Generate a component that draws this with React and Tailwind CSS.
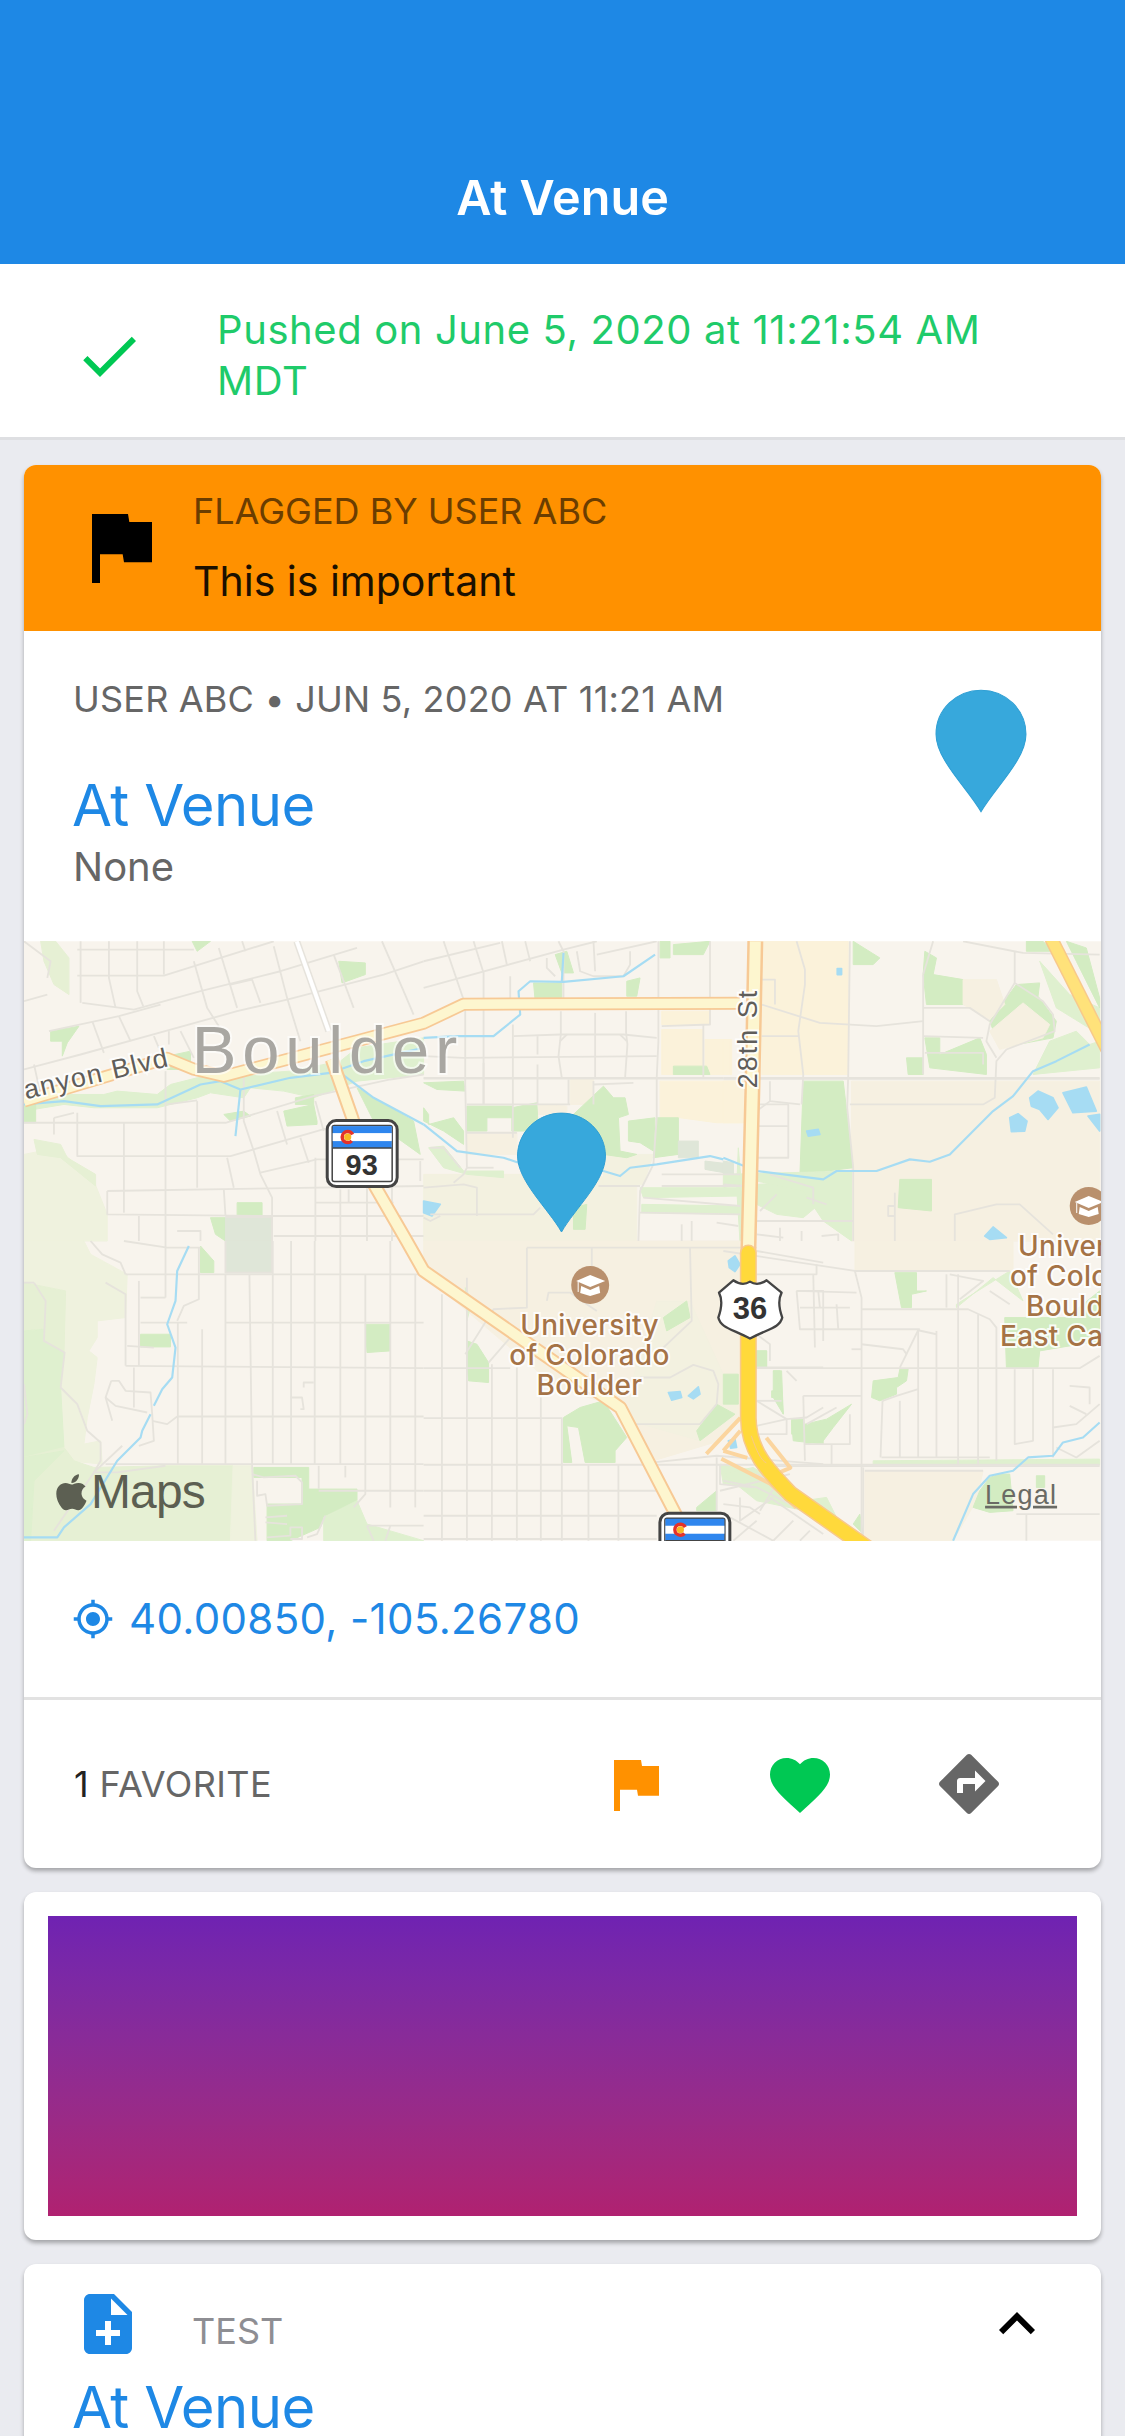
import React from "react";

const ROAD = "#e6e3dc";
const G = "#d3ecc2", GL = "#dff0cf", GP = "#e6f0d4", OL = "#eff2de", T = "#f6f0e1", TP = "#f3f1e0", C = "#fbf2da", GY = "#dfe6d8", W = "#a6dcf3";

const crops = [
  {
    tx: 0, ty: 0,
    fills: [
      [OL, "0,640 100,620 210,720 250,820 250,900 0,900"],
      [GP, "95,0 135,50 135,160 90,130 60,60 50,0"],
      [GP, "30,595 110,610 130,650 215,700 215,735 110,650 40,640"],
      [GL, "0,490 130,460 240,460 280,450 400,460 440,430 520,410 590,400 650,400 800,390 950,360 1000,320 1200,290 1200,400 1000,420 870,470 780,450 680,440 660,470 560,455 520,470 400,500 210,500 120,490 0,510"],
      [G, "80,270 165,255 130,305 115,345 115,300 80,300"],
      [G, "600,520 660,510 680,525 620,540"],
      [G, "780,510 870,490 880,540 880,550 790,555"],
      [G, "815,470 870,460 870,490 815,490"],
      [G, "945,60 1025,65 1025,100 955,125"],
      [G, "505,0 560,0 520,30"],
      [G, "640,785 715,785 715,825 640,825"],
      [G, "0,490 35,490 35,545 0,545"],
      [G, "1000,440 1170,540 1190,640 1050,540"],
      [G, "560,830 605,830 605,900 575,880"],
      [G, "430,345 500,330 500,385 430,385"],
      [GY, "605,828 745,828 745,900 605,900"],
    ],
    roads: [
      "170,0 170,185", "255,0 255,110 275,200", "340,0 340,150 358,195", "420,0 420,100",
      "160,25 510,25", "160,103 420,103 750,0", "175,185 330,205 530,150 770,90 1000,20",
      "75,270 285,225 410,190", "0,385 170,340 440,265 640,210 790,175 1080,100 1200,60",
      "620,130 685,115 710,185", "0,0 80,60 70,110", "0,180 70,160", "510,60 550,200 585,255",
      "585,20 640,200", "655,0 665,30", "750,15 790,170 830,300", "930,40 990,200", "1075,0 1140,150 1170,220",
      "205,240 240,335", "285,225 320,300", "390,285 405,320", "435,270 435,310", "470,270 510,350",
      "0,545 605,545 870,465 1100,415 1200,400", "430,490 520,478", "425,390 425,900", "520,480 520,740",
      "160,515 160,645 620,645 880,570 930,555", "300,545 300,815", "90,530 150,515", "90,530 90,580",
      "250,750 250,820 750,825 1200,825", "250,750 1200,735", "660,400 660,540 690,630 710,700 745,770 745,825",
      "610,650 630,740", "760,510 790,610", "830,590 855,665", "710,695 880,655 1200,655",
      "875,480 900,570", "875,650 875,900", "950,745 950,900", "1030,740 1030,900", "975,745 975,785",
      "875,785 1110,785", "750,885 1200,885", "1105,655 1105,900", "1190,660 1190,720", "345,825 345,900",
      "460,870 530,870 530,900", "600,745 605,825", "605,828 745,828 745,900", "0,480 50,460 30,370",
    ],
    water: [
      "0,490 120,480 230,495 400,490 530,430 590,420 650,445 800,410 920,395 1020,360 1200,320",
      "950,395 1050,470 1200,550", "650,445 635,585",
    ],
    lakes: [],
  },
  {
    tx: 400, ty: 0,
    fills: [
      [T, "130,575 280,575 280,640 130,640"],
      [TP, "0,700 300,700 500,700 640,730 640,900 0,900"],
      [TP, "540,640 690,640 660,730 540,730"],
      [C, "715,210 860,210 860,250 715,250"], [C, "715,265 840,265 840,400 715,400"],
      [C, "845,295 925,295 925,400 845,400"], [C, "710,420 960,420 960,545 880,545 770,530 710,530"],
      [T, "440,415 510,415 510,490 440,490"], [T, "345,490 430,495 430,520 345,520"],
      [G, "330,125 415,125 415,180 335,180"], [G, "395,40 430,30 450,95 415,95"],
      [G, "610,120 650,110 640,165 610,165"], [G, "710,0 740,0 740,50 710,50"], [G, "750,10 860,0 840,40 750,40"],
      [G, "750,375 850,375 860,400 750,400"], [G, "0,425 120,420 125,450 40,445"],
      [G, "130,495 265,495 265,530 190,530 190,570 130,570"], [G, "265,500 340,485 345,570 265,570"],
      [G, "450,520 540,435 570,470 605,470 615,520 585,530 590,630 640,640 610,650 540,640 540,600"],
      [G, "615,540 695,530 690,630 650,605 615,600"], [G, "700,530 765,530 765,640 690,650"],
      [G, "0,500 15,520 15,550 90,530 120,570 120,610 60,570 0,540"],
      [GL, "945,620 960,800 950,900 940,740"], [GL, "650,740 950,740 950,765 660,770"],
      [GL, "655,790 945,795 945,820 655,815"], [GL, "1000,730 1200,720 1200,780 1140,830 1060,820 1000,790"],
      [GL, "15,620 60,615 120,690 240,690 240,710 130,700 60,680"], [G, "450,800 490,790 485,865 450,865"],
      [GY, "765,600 825,600 825,650 765,650"], [GY, "845,660 930,670 930,700 845,685"],
    ],
    roads: [
      "0,60 230,5", "0,140 420,25 520,0", "60,0 125,190 125,430 130,680", "150,0 180,95 180,490", "235,0 250,70",
      "305,0 320,60", "405,0 420,30 420,170", "510,0 515,90", "460,30 470,90 510,105 600,105", "520,40 700,0",
      "620,30 620,70 600,105", "260,105 260,180", "370,50 370,80 395,105", "412,210 412,280 405,345 415,410",
      "515,215 515,410", "608,210 608,275 612,310 605,410", "705,0 705,300 700,410 700,530 690,670 650,750 645,900",
      "860,0 860,250 715,255", "268,250 268,590", "342,285 342,340", "342,370 342,490",
      "270,285 410,280 600,280 700,290", "410,300 430,280", "590,280 610,300", "0,345 120,350 700,345",
      "180,365 180,490", "130,490 440,490", "510,420 510,490", "130,575 280,575", "510,430 630,425", "435,415 435,490",
      "0,740 120,730 160,740 160,825", "20,820 330,820 350,800", "0,830 20,840 50,825", "130,680 120,700 90,725",
      "130,680 210,680", "20,620 60,620 110,680", "840,250 840,410", "525,735 650,735", "715,700 950,700",
      "715,735 950,735", "660,770 950,795", "650,815 950,820", "775,850 775,900", "805,840 805,900", "880,845 945,855",
      "0,410 900,410", "0,412 900,412",
    ],
    water: [
      "0,290 100,285 210,285 290,220 285,150 320,120 420,122 600,105 695,40", "420,35 415,120",
      "0,550 100,630 240,650 285,665 540,690 590,705 620,680 700,670 860,645 900,655",
    ],
    lakes: ["0,780 50,790 25,825 0,815"],
  },
  {
    tx: 700, ty: 0,
    fills: [
      [T, "385,420 1130,420 1130,900 385,900"],
      [C, "115,0 375,0 375,400 115,400"], [C, "0,300 20,300 20,400 0,400"], [C, "0,420 60,420 60,545 0,545"],
      [GL, "980,300 1060,270 1100,310 1130,300 1130,380 930,400"],
      [GL, "950,60 1040,160 1130,200 1130,280 1000,200"],
      [G, "390,0 470,50 450,70 390,70"], [G, "605,30 640,50 630,100 720,115 720,190 610,190 600,100"],
      [G, "550,350 600,350 600,400 555,400"], [G, "605,290 650,290 650,340 770,290 790,340 790,400 620,380"],
      [G, "800,240 880,130 950,125 945,165 1000,240 990,290 830,320"], [G, "910,0 960,0 990,30 910,30"],
      [G, "1030,0 1090,20 1130,170 1130,200 1060,60"], [G, "240,420 360,420 390,680 230,700"],
      [T, "800,270 900,185 980,250 960,290 830,325"], [T, "720,115 820,115 845,190 800,235 720,190"],
      [G, "530,715 625,715 625,810 525,800"], [GL, "0,700 385,690 385,900 300,840 240,750 100,720 0,740"],
      [GY, "0,660 30,665 30,700 0,700"],
    ],
    roads: [
      "380,0 375,400 372,500 390,680 390,900", "220,0 245,85 245,130 225,270 240,400 235,490",
      "115,190 290,245 460,255 600,240", "115,115 155,115 155,190", "115,285 225,285", "600,100 600,400", "630,0 600,100",
      "600,200 740,200 800,240", "600,285 780,290", "605,335 780,335 780,370", "875,30 875,125 960,180 990,220 995,270 850,325 820,360 815,470 780,490 380,490",
      "875,125 800,250 790,300 820,350", "0,410 1130,410", "0,413 1130,413", "720,0 900,35 1130,40",
      "140,420 140,480 230,490", "140,480 100,510", "100,490 195,490 195,650 100,650", "100,555 195,555",
      "140,700 270,740 270,790", "160,760 110,810", "250,770 310,790", "100,840 390,840", "100,880 180,890", "0,730 60,735",
      "170,860 170,900", "235,870 235,900", "295,885 345,880 345,900", "515,755 515,900",
      "695,900 695,820 820,790 890,790 990,880", "515,795 495,795 495,825 515,825",
    ],
    water: [
      "0,650 100,690 300,715 340,690 460,690 560,655 620,662 680,640 810,510 870,465 930,390 1000,360 1100,310",
    ],
    lakes: [
      "920,470 945,450 990,470 1005,500 975,535 950,505 925,495", "1020,455 1090,438 1120,510 1050,515",
      "860,530 885,518 912,540 905,570 865,572", "785,885 810,858 850,890 800,895", "250,570 285,565 290,580 255,585",
      "342,82 355,82 355,100 342,100", "1095,525 1130,520 1130,570",
    ],
  },
  {
    tx: 0, ty: 300,
    fills: [
      [OL, "0,0 180,0 200,40 310,100 305,230 220,240 220,290 195,330 220,350 210,430 190,530 180,610 230,600 235,670 130,660 0,700"],
      [GP, "0,125 125,150 120,340 60,300 60,265 0,270"],
      [GL, "0,270 60,265 60,300 120,335 110,440 120,620 0,650"],
      [GP, "0,650 120,620 150,660 210,680 425,675 628,675 620,900 0,900"],
      [GL, "0,650 120,630 30,720 20,900 0,900"],
      [OL, "628,675 685,675 700,900 620,900"],
      [G, "350,280 440,280 440,318 350,318"], [G, "530,15 570,60 570,95 530,95"], [G, "1025,250 1100,250 1100,330 1030,335"],
      [G, "690,680 855,680 855,745 1000,745 1000,780 905,825 890,860 800,900 730,900 730,790 835,790 835,710 690,710"],
      [GL, "900,830 1000,780 1030,850 1200,900 900,900"],
      [GY, "605,0 745,0 745,95 605,95"],
    ],
    roads: [
      "305,100 1200,100", "345,120 345,375", "425,0 425,170", "350,170 425,170", "350,245 490,245", "605,245 1200,245",
      "462,245 462,670", "535,265 535,670", "605,100 605,670", "677,100 685,675 695,900", "747,0 747,670", "802,0 802,670",
      "873,0 873,670", "950,0 950,670", "1025,100 1025,760 990,800", "1100,0 1100,800", "1175,100 1175,800",
      "525,20 525,175 480,195 460,240", "305,375 1200,382", "462,527 1200,527", "245,670 1200,670",
      "200,0 235,40 290,65 305,100", "245,125 305,160 305,375", "310,315 390,320", "330,380 330,500",
      "262,420 245,470 265,540", "262,420 285,420 305,450 380,455 385,520 390,600 345,615", "245,470 275,495 370,515",
      "385,540 430,550 460,527", "30,125 65,180 60,300 122,335 110,440 160,490 190,570 230,605 230,660 210,695",
      "0,125 30,125", "0,430 10,520 0,550", "295,615 210,695 90,870", "210,695 280,695 425,675",
      "685,700 720,710 815,705 835,725 835,790 730,795 725,760 700,765 700,720", "885,675 885,745", "965,675 965,710",
      "885,750 1200,750", "840,440 840,425 870,425", "800,470 835,470 840,505 830,505", "725,830 790,825", "725,845 790,850",
      "730,890 800,885 800,860 835,860 835,895 800,895", "1030,855 1200,855", "1030,855 1050,900", "1100,855 1085,900",
      "905,825 880,880 850,890", "605,0 605,95 745,95 745,0", "300,0 430,20 530,20",
    ],
    water: [
      "495,15 460,90 455,180 430,250 455,320 445,410 415,445 390,495",
      "380,520 355,570 350,590 280,660 200,790 120,860 100,890 0,890",
    ],
    lakes: [],
  },
  {
    tx: 400, ty: 300,
    fills: [
      [T, "0,0 950,0 950,530 890,600 690,660 620,560 590,500 400,440 0,100"],
      [TP, "700,180 800,180 900,400 940,400 940,520 830,600 620,540 620,440"],
      [G, "790,180 800,230 730,270 720,230"], [G, "900,400 945,400 945,490 900,490"], [G, "880,490 935,520 830,600 820,570"],
      [G, "130,300 160,310 195,365 195,425 135,420 130,380"],
      [G, "420,530 470,500 540,480 610,590 575,630 575,665 485,665 465,560 430,555 445,665 420,665"],
      [G, "995,330 1030,330 1030,380 1000,380"], [G, "1050,390 1075,390 1080,520 1050,470"],
      [G, "1105,540 1140,540 1150,580 1200,540 1200,610 1110,600"], [GL, "890,670 1000,690 990,740 900,730"],
      [G, "820,800 880,750 880,810 820,810"], [GL, "125,140 145,180 130,240"],
    ],
    roads: [
      "310,20 310,200 210,205 125,340", "310,20 1000,20", "505,20 505,80", "800,20 805,240 720,320",
      "370,180 375,155 440,155 490,190 520,210", "195,365 260,290",
      "650,410 740,410 810,372 870,390 885,430 880,490 830,550 630,550 590,490",
      "55,160 55,900", "130,110 130,900", "205,370 205,900", "280,380 280,900", "352,470 352,900", "415,530 415,900",
      "495,670 495,900", "585,670 585,900", "0,382 260,382", "0,532 415,532", "0,672 1000,672", "0,750 700,750",
      "0,825 700,825", "0,895 700,895", "690,665 880,645 1200,670", "1000,30 1200,65", "1000,100 1180,100 1180,70",
      "1120,150 1200,150 1200,300", "1200,380 1000,380", "1090,390 1120,420", "1000,480 1090,535 1150,530 1200,500",
      "880,650 880,810", "890,670 890,730 990,740", "1000,700 1200,800", "890,750 1100,700", "950,770 950,840 1050,770",
      "1040,770 1200,880", "920,830 1050,900", "1000,280 1040,310 1040,360",
    ],
    water: [],
    lakes: [
      "735,455 770,452 775,470 745,478", "795,465 825,438 830,460 810,474", "915,60 935,45 950,70 935,92 918,80",
      "915,600 935,595 940,620 922,622",
    ],
  },
  {
    tx: 700, ty: 300,
    fills: [
      [T, "395,0 870,0 870,90 395,90"], [T, "425,690 780,690 760,780 690,900 425,900"],
      [G, "515,95 580,95 580,150 610,150 565,160 565,200 535,200"],
      [G, "450,420 525,410 530,385 555,385 550,420 520,440 520,460 470,480 445,470"],
      [G, "95,330 130,330 130,380 95,380"], [G, "150,390 170,390 180,520 170,470 145,470 145,450 175,450"],
      [G, "245,550 310,535 385,490 330,560 300,600 245,610"], [G, "205,535 240,535 240,580 205,580"],
      [GL, "0,700 90,680 240,780 310,770 340,830 100,780"], [G, "845,230 1030,230 1130,150 1130,300 950,330 945,380 850,380"],
      [GL, "700,190 780,140 860,90 900,180 810,110 700,200"], [GL, "450,660 1130,655 1130,672 450,672"],
      [G, "750,800 770,750 800,710 830,700 860,700 870,810 800,815"], [G, "940,705 965,705 965,740 940,740"],
      [G, "390,850 410,820 420,880"],
    ],
    roads: [
      "395,90 415,170 415,900", "0,30 395,90 860,90", "415,205 735,205 800,235 820,260 820,660", "705,100 705,670",
      "670,100 670,200", "765,220 765,670", "640,270 640,650", "585,265 585,650", "530,480 530,650", "478,480 472,650",
      "478,480 520,465 585,445", "585,268 640,280", "585,268 530,380", "415,265 590,265", "220,150 400,155",
      "220,150 230,265 415,265", "270,100 275,320", "340,190 345,265", "285,150 290,200", "230,200 380,200",
      "100,382 1070,382 1130,345", "875,385 875,610 930,600 930,385", "990,385 990,650", "1040,435 1100,440 1100,490",
      "1040,495 1090,520", "1130,490 1060,550 990,560", "415,310 540,325 550,340", "385,325 415,325", "250,550 340,500",
      "240,465 415,465", "240,465 245,660", "380,520 380,610 245,610", "325,610 325,670", "100,555 190,535 190,580 105,580",
      "100,480 175,480", "100,672 1130,672", "100,676 1130,676", "420,680 420,900", "475,650 800,650", "425,690 780,690",
      "880,820 1130,820", "910,820 910,900", "0,720 100,740 400,890", "150,745 110,810", "210,840 150,900", "260,870 230,900",
      "0,790 80,800 110,820", "100,840 30,900", "680,100 780,120 710,175", "800,150 860,190", "1000,620 1060,650 1130,600",
    ],
    water: ["690,900 750,760 800,705 870,690 915,650 990,645 1020,605 1080,590 1130,545"],
    lakes: [],
  },
];

const Layer = ({ render }) =>
  crops.map((c, i) => (
    <g key={i} transform={`translate(${c.tx} ${c.ty}) scale(0.3333)`}>
      {render(c)}
    </g>
  ));

const PIN = "M538,291 C525,268 494,240 494,215 C494,191 514,172 538,172 C562,172 582,191 582,215 C582,240 551,268 538,291 Z";

const Cap = ({ cx, cy }) => (
  <g transform={`translate(${cx} ${cy})`}>
    <circle r="19" fill="#b9906d" />
    <path d="M-14,-4 L0,-10 L15,-4 L0,2 Z" fill="#fff" />
    <path d="M-9,1 L0,5 L9,1 L10,8 L0,11 L-10,8 Z" fill="#fff" />
    <path d="M-12,-3 L-12,7" stroke="#fff" strokeWidth="1" />
  </g>
);

const ColoradoSign = ({ x, y }) => (
  <g transform={`translate(${x} ${y})`}>
    <rect x="1.5" y="1.5" width="70" height="66" rx="9" fill="#fff" stroke="#444" strokeWidth="3" />
    <rect x="6.5" y="6.5" width="60" height="56" rx="2" fill="#fff" stroke="#444" strokeWidth="1.5" />
    <rect x="7" y="7" width="59" height="22" fill="#2f86ee" />
    <rect x="7" y="14" width="59" height="8" fill="#fff" />
    <path d="M7,29 H66" stroke="#444" strokeWidth="1.5" />
    <circle cx="22" cy="18" r="5.5" fill="none" stroke="#e5322a" strokeWidth="3.5" strokeDasharray="27 8" strokeDashoffset="-4" />
    <circle cx="22" cy="18" r="3.6" fill="#f7b924" />
  </g>
);

function MapView() {
  const cu = { fontFamily: "Inter, 'Noto Sans', sans-serif", fontWeight: 500, fill: "#a57346", stroke: "rgba(255,255,255,.85)", strokeWidth: 4, paintOrder: "stroke", fontSize: 28 };
  const gr = { fontFamily: "'Liberation Sans', sans-serif", fill: "#5f5d5a", stroke: "rgba(255,255,255,.85)", strokeWidth: 4, paintOrder: "stroke", fontSize: 27, letterSpacing: 1.5 };
  return (
    <svg viewBox="0 0 1078 600" className="block w-full h-[600px]" style={{ overflow: "hidden" }}>
      <rect width="1078" height="600" fill="#f8f4ed" />
      <Layer render={(c) => c.fills.map(([f, p], i) => <polygon key={i} points={p} fill={f} stroke={f} strokeWidth="3" strokeLinejoin="round" />)} />
      <Layer render={(c) => c.lakes.map((p, i) => <polygon key={i} points={p} fill={W} stroke={W} strokeWidth="5" strokeLinejoin="round" />)} />
      <Layer render={(c) => c.roads.map((p, i) => <polyline key={i} points={p} fill="none" stroke={ROAD} strokeWidth="5.5" strokeLinejoin="round" />)} />
      <Layer render={(c) => c.water.map((p, i) => <polyline key={i} points={p} fill="none" stroke={W} strokeWidth="6.5" strokeLinejoin="round" />)} />

      <polyline points="273,0 305,90" fill="none" stroke={ROAD} strokeWidth="7" />
      <polyline points="273,0 305,90" fill="none" stroke="#fff" strokeWidth="4" />

      <g fill="none" strokeLinejoin="round">
        <polyline points="0,160 143,117 170,128 200,135 400,82 440,63 717,62" stroke="#f7c995" strokeWidth="13" />
        <polyline points="308,118 328,175 350,243 383,300 400,330 597,467 653,575" stroke="#f7c995" strokeWidth="14" />
        <polyline points="0,160 143,117 170,128 200,135 400,82 440,63 717,62" stroke="#fdf6cf" strokeWidth="9.5" />
        <polyline points="308,118 328,175 350,243 383,300 400,330 597,467 653,575" stroke="#fdf6cf" strokeWidth="10" />
        <polyline points="732,0 729,150 725,312" stroke="#f7c995" strokeWidth="16" />
        <polyline points="732,0 729,150 725,312" stroke="#fdf6cf" strokeWidth="11" />

        <path d="M683,513 L717,477 M700,510 L717,490 M700,510 L724,517 M698,518 L747,543 L773,567 M743,497 L767,527 L753,533" stroke="#fbd59f" strokeWidth="4" />
        <path d="M725,312 L725,477 C725,510 745,530 767,553 L845,608" stroke="#f8c98a" strokeWidth="17" strokeLinecap="round" />
        <path d="M725,312 L725,477 C725,510 745,530 767,553 L845,608" stroke="#ffd93b" strokeWidth="14" strokeLinecap="round" />
        <path d="M728,495 C733,510 738,520 743,522" stroke="#f8c98a" strokeWidth="1" />
        <path d="M1028,-3 L1084,108" stroke="#f8c98a" strokeWidth="14" />
        <path d="M1028,-3 L1084,108" stroke="#ffe27a" strokeWidth="11" />
      </g>

      <text x="168" y="132" fontFamily="'Liberation Sans', sans-serif" fontSize="67" letterSpacing="5.8" fill="#a9a7a2" stroke="rgba(255,255,255,.6)" strokeWidth="4" style={{ paintOrder: "stroke" }}>Boulder</text>
      <text transform="translate(2 158) rotate(-13)" style={gr}>anyon Blvd</text>
      <text transform="translate(734 147) rotate(-90)" style={{ ...gr, letterSpacing: 2 }}>28th St</text>

      <Cap cx={566.7} cy={344} />
      <g textAnchor="middle" style={cu}>
        <text x="566" y="394" letterSpacing="0.3">University</text>
        <text x="566" y="424" letterSpacing="0.3">of Colorado</text>
        <text x="566" y="454" letterSpacing="0.3">Boulder</text>
      </g>
      <Cap cx={1065.7} cy={265} />
      <g style={cu}>
        <text x="995" y="315" letterSpacing="0.3">University</text>
        <text x="987" y="345" letterSpacing="0.3">of Colorado</text>
        <text x="1003" y="375" letterSpacing="0.3">Boulder</text>
        <text x="977" y="405" letterSpacing="0.3">East Campus</text>
      </g>

      <ColoradoSign x={302} y={178} />
      <text x="338" y="234" textAnchor="middle" fontFamily="'Liberation Sans', sans-serif" fontWeight="700" fontSize="29" fill="#333">93</text>
      <ColoradoSign x={635} y={571} />

      <g transform="translate(400 300) scale(0.3333)">
        <path d="M930,118 C950,132 965,132 980,122 C995,132 1010,132 1030,118 L1075,155 C1062,180 1068,205 1077,230 C1070,262 1030,265 980,293 C930,265 892,262 885,230 C894,205 900,180 887,155 Z" fill="#fff" stroke="#444" strokeWidth="7" strokeLinejoin="round" />
      </g>
      <text x="726.7" y="378" textAnchor="middle" fontFamily="'Liberation Sans', sans-serif" fontWeight="700" fontSize="31" fill="#333">36</text>

      <path d={PIN} fill="#37a8dc" stroke="#2f9fd4" strokeWidth="1" />

      <path transform="translate(32 531) scale(0.0803)" fill="#5c5f52" d="M318.7 268.7c-.2-36.7 16.4-64.4 50-84.8-18.8-26.9-47.2-41.7-84.7-44.6-35.5-2.8-74.3 20.7-88.5 20.7-15 0-49.4-19.7-76.4-19.7C63.3 141.2 4 184.8 4 273.5q0 39.3 14.4 81.2c12.8 36.7 59 126.7 107.2 125.2 25.2-.6 43-17.9 75.8-17.9 31.8 0 48.3 17.9 76.4 17.9 48.6-.7 90.4-82.5 102.6-119.3-65.2-30.7-61.7-90-61.7-91.9zm-56.6-164.2c27.3-32.4 24.8-61.9 24-72.5-24.1 1.4-52 16.4-67.9 34.9-17.5 19.8-27.8 44.3-25.6 71.9 26.1 2 49.9-11.4 69.5-34.3z" />
      <text x="67" y="567" fontFamily="'Liberation Sans', sans-serif" fontSize="48" letterSpacing="-0.8" fill="#5c5f52">Maps</text>
      <text x="962" y="563" fontFamily="'Liberation Sans', sans-serif" fontSize="27" letterSpacing="1.2" fill="#6a6a64" textDecoration="underline">Legal</text>
    </svg>
  );
}

const Icon = ({ d, className }) => (
  <svg viewBox="0 0 24 24" className={className} fill="currentColor"><path d={d} /></svg>
);
const FLAG = "M66,60 H147 L150,78 H201 V167 H138 L135,149 H84 V213 H66 Z";

const Title = () => (
  <div className="text-[58px] leading-[72px] tracking-[-0.6px] text-[#1e88e5]">At Venue</div>
);

export default function App() {
  return (
    <div className="w-[1125px] h-[2436px] overflow-hidden bg-[#eaebf0] font-['Inter','Noto_Sans',sans-serif]">
      <header className="h-[264px] bg-[#1e88e5] flex items-end justify-center pb-[37px]">
        <h1 className="text-[48.5px] leading-[58px] font-semibold text-white">At Venue</h1>
      </header>

      <section className="h-[176px] pt-[8px] bg-white border-b-[3px] border-[#dedfe2] flex items-center">
        <Icon className="w-[72px] h-[72px] ml-[73px] mt-[3px] text-[#00c853] shrink-0" d="M9 16.17L4.83 12l-1.42 1.41L9 19 21 7l-1.41-1.41z" />
        <p className="ml-[72px] w-[800px] text-[40px] leading-[51px] text-[#1fcb6a] tracking-[0.6px]">Pushed on June 5, 2020 at 11:21:54 AM MDT</p>
      </section>

      <main className="px-[24px] pt-[25px] flex flex-col gap-[24px]">
        <article className="h-[1403px] bg-white rounded-[12px] overflow-hidden shadow-[0_3px_4px_rgba(0,0,0,0.3)]">
          <div className="h-[166px] bg-[#ff9100] flex items-center">
            <svg viewBox="66 60 135 153" preserveAspectRatio="none" className="w-[60px] h-[69px] ml-[68px] shrink-0"><path d={FLAG} fill="#000" /></svg>
            <div className="ml-[41px] pb-[3px]">
              <div className="text-[36px] leading-[44px] text-[#6b3d00]">FLAGGED BY USER ABC</div>
              <div className="mt-[25px] text-[41px] leading-[46px] text-[#1a1000]">This is important</div>
            </div>
          </div>

          <div className="h-[310px] flex justify-between pl-[49px] pr-[74px]">
            <div className="pt-[45px]">
              <div className="text-[36px] leading-[46px] text-[#666] tracking-[0.2px]">USER ABC • JUN 5, 2020 AT 11:21 AM</div>
              <div className="mt-[47px] -ml-[1px]"><Title /></div>
              <div className="mt-[1px] text-[40px] leading-[50px] text-[#666]">None</div>
            </div>
            <svg viewBox="493 171 90 121" className="w-[92px] h-[126px] mt-[57px] shrink-0"><path d={PIN} fill="#37a8dc" stroke="#2f9fd4" strokeWidth="1" /></svg>
          </div>

          <MapView />

          <div className="h-[156px] flex items-center pl-[48px] text-[#1e88e5]">
            <Icon className="w-[42px] h-[42px] shrink-0" d="M12 8c-2.21 0-4 1.79-4 4s1.79 4 4 4 4-1.79 4-4-1.79-4-4-4zm8.94 3c-.46-4.17-3.77-7.48-7.94-7.94V1h-2v2.06C6.83 3.52 3.52 6.83 3.06 11H1v2h2.06c.46 4.17 3.77 7.48 7.94 7.94V23h2v-2.06c4.17-.46 7.48-3.77 7.94-7.94H23v-2h-2.06zM12 19c-3.87 0-7-3.13-7-7s3.13-7 7-7 7 3.13 7 7-3.13 7-7 7z" />
            <span className="ml-[15px] text-[42px] leading-[50px] tracking-[0.35px]">40.00850, -105.26780</span>
          </div>
          <div className="h-[3px] bg-[#e2e2e2]" />

          <div className="h-[168px] flex items-center pl-[50px] relative">
            <span className="text-[36px] leading-[44px] text-[#666] tracking-[0.4px]"><span className="text-[#222]">1</span> FAVORITE</span>
            <div className="ml-auto flex items-center">
              <svg viewBox="66 60 135 153" className="w-[45px] h-[51px] mr-[105px] mt-[2px]"><path d={FLAG} fill="#ff9100" /></svg>
              <Icon className="w-[72px] h-[72px] mr-[97px] mt-[2px] text-[#00c853]" d="M12 21.35l-1.45-1.32C5.4 15.36 2 12.28 2 8.5 2 5.42 4.42 3 7.5 3c1.74 0 3.41.81 4.5 2.09C13.09 3.81 14.76 3 16.5 3 19.58 3 22 5.42 22 8.5c0 3.78-3.4 6.86-8.55 11.54L12 21.35z" />
              <Icon className="w-[72px] h-[72px] mr-[96px] text-[#666]" d="M21.71 11.29l-9-9c-.39-.39-1.02-.39-1.41 0l-9 9c-.39.39-.39 1.02 0 1.41l9 9c.39.39 1.02.39 1.41 0l9-9c.39-.38.39-1.01 0-1.41zM14 14.5V12h-4v3H8v-4c0-.55.45-1 1-1h5V7.5l3.5 3.5-3.5 3.5z" />
            </div>
          </div>
        </article>

        <article className="h-[348px] bg-white rounded-[12px] p-[24px] shadow-[0_3px_4px_rgba(0,0,0,0.3)]">
          <div className="h-[300px] bg-gradient-to-b from-[#6f22b2] to-[#b02170]" />
        </article>

        <article className="h-[300px] bg-white rounded-[12px] shadow-[0_3px_4px_rgba(0,0,0,0.3)] pt-[24px] pl-[48px]">
          <div className="flex items-start">
            <Icon className="w-[72px] h-[72px] text-[#1e88e5] shrink-0" d="M14 2H6c-1.1 0-1.99.9-1.99 2L4 20c0 1.1.89 2 1.99 2H18c1.1 0 2-.9 2-2V8l-6-6zm2 14h-3v3h-2v-3H8v-2h3v-3h2v3h3v2zm-3-7V3.5L18.5 9H13z" />
            <span className="ml-[48px] mt-[21px] text-[36px] leading-[44px] text-[#8e8e93]">TEST</span>
            <Icon className="w-[72px] h-[72px] ml-auto mr-[48px] text-black shrink-0" d="M7.41 15.41L12 10.83l4.59 4.58L18 14l-6-6-6 6z" />
          </div>
          <div className="mt-[11px]"><Title /></div>
        </article>
      </main>
    </div>
  );
}
